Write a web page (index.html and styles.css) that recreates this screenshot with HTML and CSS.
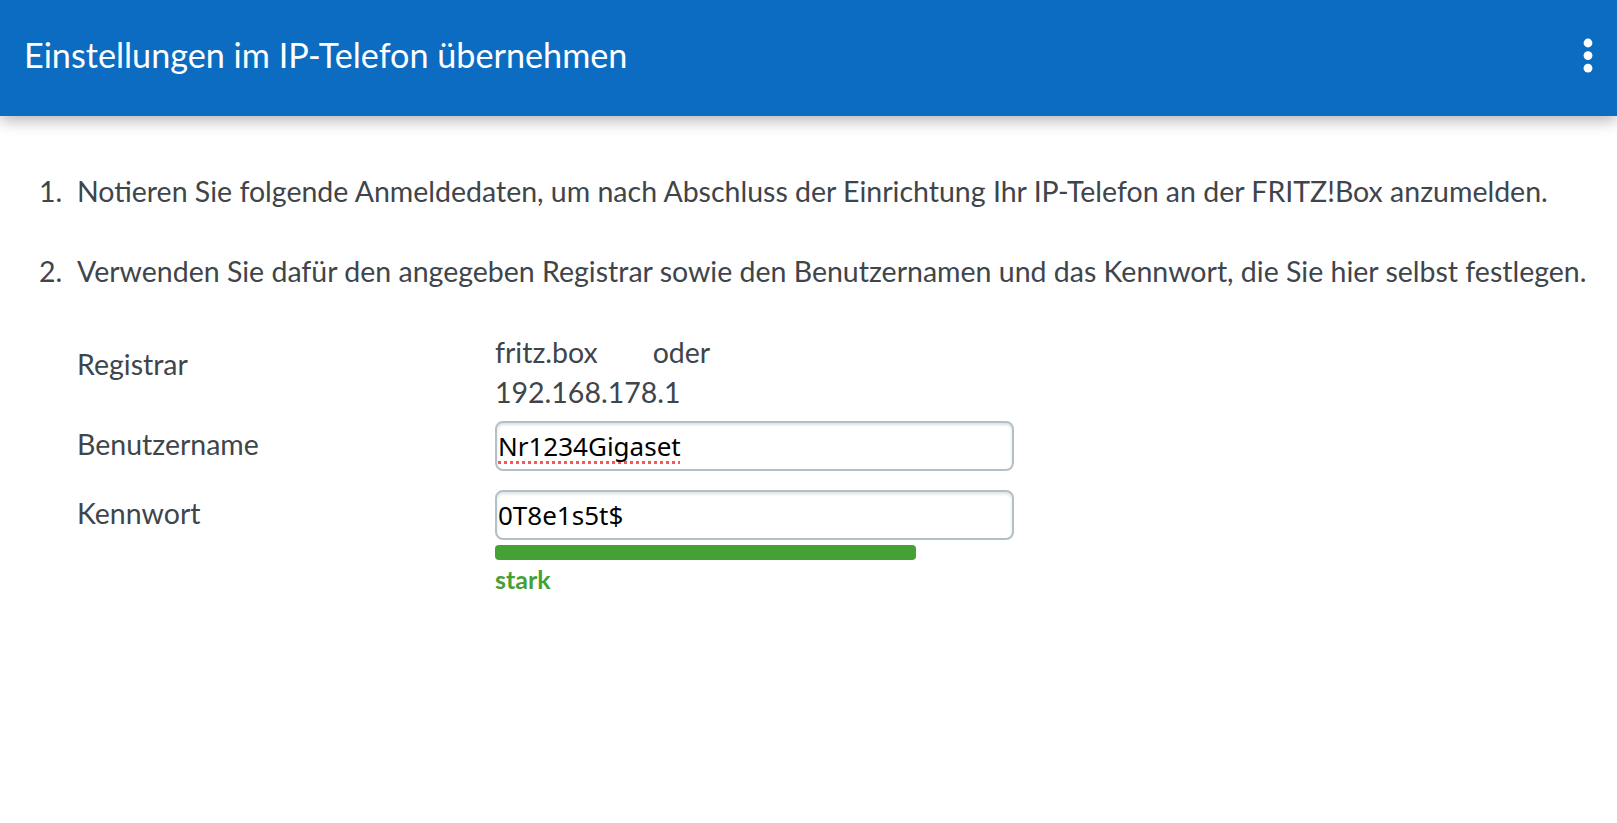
FILE: index.html
```html
<!DOCTYPE html>
<html lang="de">
<head>
  <meta charset="UTF-8">
  <meta name="viewport" content="width=device-width, initial-scale=1.0">
  <title>Einstellungen im IP-Telefon übernehmen</title>
  <link rel="stylesheet" href="styles.css">
</head>
<body>
  <header id="top-bar">
    <h1>Einstellungen im IP-Telefon übernehmen</h1>
    <span id="menu-icon">
      <svg width="10" height="36" viewBox="0 0 10 36">
        <circle cx="5" cy="5" r="4.4" fill="#fff"/>
        <circle cx="5" cy="17.6" r="4.4" fill="#fff"/>
        <circle cx="5" cy="30.2" r="4.4" fill="#fff"/>
      </svg>
    </span>
  </header>

  <div id="content">
    <ol class="steps">
      <li><span class="num">1.</span><span>Notieren Sie folgende Anmeldedaten, um nach Abschluss der Einrichtung Ihr IP-Telefon an der FRITZ!Box anzumelden.</span></li>
      <li><span class="num">2.</span><span>Verwenden Sie dafür den angegeben Registrar sowie den Benutzernamen und das Kennwort, die Sie hier selbst festlegen.</span></li>
    </ol>

    <div id="login-data">
      <div class="row registrar-row">
        <div class="label">Registrar</div>
        <div class="value">
          <div><span class="host">fritz.box</span><span class="or">oder</span></div>
          <div>192.168.178.1</div>
        </div>
      </div>
      <div class="row user-row">
        <div class="label">Benutzername</div>
        <div class="value">
          <input type="text" class="field misspelled" value="Nr1234Gigaset">
        </div>
      </div>
      <div class="row pass-row">
        <div class="label">Kennwort</div>
        <div class="value">
          <input type="text" class="field" value="0T8e1s5t$">
          <div class="strength-bar"></div>
          <div class="strength-text">stark</div>
        </div>
      </div>
    </div>
  </div>
</body>
</html>
```

FILE: styles.css
```css
:root {
  --blue: #0c6cc2;
  --text-color: #3e454b;
  --green: #45a135;
  --field-border: #b4c0c8;
}

body {
  margin: 0;
  font-family: Lato, "Open Sans", sans-serif;
  color: var(--text-color);
  background-color: #ffffff;
}

#top-bar {
  height: 116px;
  box-sizing: border-box;
  padding: 0 24px 8px 24px;
  display: flex;
  align-items: center;
  justify-content: space-between;
  background-color: var(--blue);
  box-shadow: 0 5px 14px rgba(0, 0, 0, 0.28);
}

#top-bar h1 {
  margin: 0;
  font-size: 34.2px;
  font-weight: 400;
  color: #ffffff;
}

#menu-icon {
  display: flex;
  margin-top: 3px;
}

#content {
  padding: 56px 0 0 39px;
  font-size: 28.5px;
}

.steps {
  list-style: none;
  margin: 0;
  padding: 0;
}

.steps li {
  display: flex;
  line-height: 39px;
  margin-bottom: 41px;
}

.num {
  flex: none;
  width: 38px;
}

#login-data {
  margin-left: 38px;
}

.row {
  display: flex;
  align-items: flex-start;
}

.label {
  flex: none;
  width: 418px;
  line-height: 46px;
}

.registrar-row .label {
  line-height: 64px;
}

.registrar-row .value {
  line-height: 40px;
}

.or {
  margin-left: 55px;
}

.user-row {
  margin-top: 9px;
}

.pass-row {
  margin-top: 19px;
}

.value {
  width: 519px;
}

.field {
  display: block;
  width: 519px;
  height: 50px;
  box-sizing: border-box;
  margin: 0;
  padding: 0 0 0 1px;
  border: 2px solid var(--field-border);
  border-radius: 8px;
  box-shadow: inset 0 2px 3px rgba(0, 0, 0, 0.12);
  font-family: "Noto Sans", sans-serif;
  font-size: 26px;
  color: #000000;
  background-color: #ffffff;
  outline: none;
}

.misspelled {
  text-decoration: underline dotted #f25a5a;
  text-decoration-thickness: 3px;
  text-decoration-skip-ink: none;
  text-underline-offset: 5px;
}

.strength-bar {
  width: 421px;
  height: 15px;
  margin-top: 5px;
  border-radius: 4px;
  background-color: var(--green);
}

.strength-text {
  margin-top: 4px;
  font-size: 25px;
  font-weight: 700;
  color: var(--green);
}
```
